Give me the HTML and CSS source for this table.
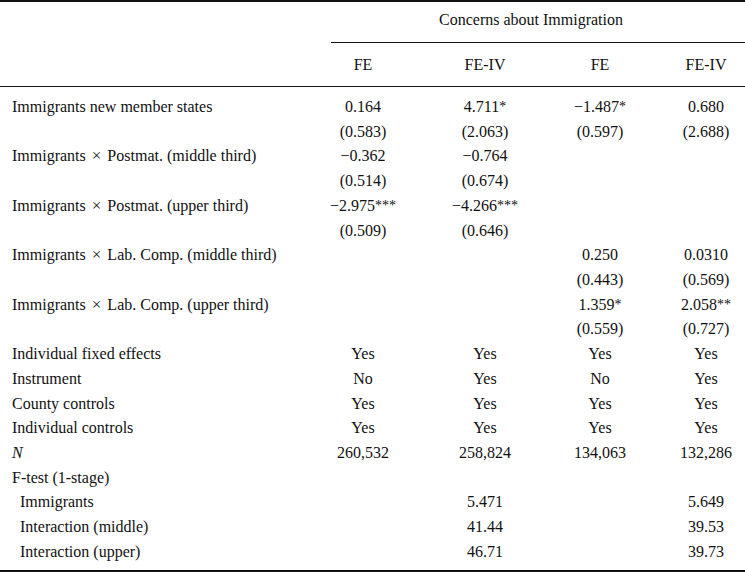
FILE: index.html
```html
<!DOCTYPE html>
<html lang="en">
<head>
<meta charset="utf-8">
<title>Concerns about Immigration</title>
<link rel="stylesheet" href="styles.css">
</head>
<body>
<div class="table">
  <div class="head head-group">
    <div class="group-title">Concerns about Immigration</div>
  </div>
  <div class="head head-cols">
    <div></div>
    <div class="c">FE</div>
    <div class="c">FE-IV</div>
    <div class="c">FE</div>
    <div class="c">FE-IV</div>
  </div>
  <div class="body">
    <div class="l">Immigrants new member states</div>
    <div class="c">0.164</div>
    <div class="c">4.711<sup>*</sup></div>
    <div class="c">−1.487<sup>*</sup></div>
    <div class="c">0.680</div>

    <div class="l"></div>
    <div class="c">(0.583)</div>
    <div class="c">(2.063)</div>
    <div class="c">(0.597)</div>
    <div class="c">(2.688)</div>

    <div class="l">Immigrants <span class="times">×</span> Postmat. (middle third)</div>
    <div class="c">−0.362</div>
    <div class="c">−0.764</div>
    <div class="c"></div>
    <div class="c"></div>

    <div class="l"></div>
    <div class="c">(0.514)</div>
    <div class="c">(0.674)</div>
    <div class="c"></div>
    <div class="c"></div>

    <div class="l">Immigrants <span class="times">×</span> Postmat. (upper third)</div>
    <div class="c">−2.975<sup>***</sup></div>
    <div class="c">−4.266<sup>***</sup></div>
    <div class="c"></div>
    <div class="c"></div>

    <div class="l"></div>
    <div class="c">(0.509)</div>
    <div class="c">(0.646)</div>
    <div class="c"></div>
    <div class="c"></div>

    <div class="l">Immigrants <span class="times">×</span> Lab. Comp. (middle third)</div>
    <div class="c"></div>
    <div class="c"></div>
    <div class="c">0.250</div>
    <div class="c">0.0310</div>

    <div class="l"></div>
    <div class="c"></div>
    <div class="c"></div>
    <div class="c">(0.443)</div>
    <div class="c">(0.569)</div>

    <div class="l">Immigrants <span class="times">×</span> Lab. Comp. (upper third)</div>
    <div class="c"></div>
    <div class="c"></div>
    <div class="c">1.359<sup>*</sup></div>
    <div class="c">2.058<sup>**</sup></div>

    <div class="l"></div>
    <div class="c"></div>
    <div class="c"></div>
    <div class="c">(0.559)</div>
    <div class="c">(0.727)</div>

    <div class="l">Individual fixed effects</div>
    <div class="c">Yes</div>
    <div class="c">Yes</div>
    <div class="c">Yes</div>
    <div class="c">Yes</div>

    <div class="l">Instrument</div>
    <div class="c">No</div>
    <div class="c">Yes</div>
    <div class="c">No</div>
    <div class="c">Yes</div>

    <div class="l">County controls</div>
    <div class="c">Yes</div>
    <div class="c">Yes</div>
    <div class="c">Yes</div>
    <div class="c">Yes</div>

    <div class="l">Individual controls</div>
    <div class="c">Yes</div>
    <div class="c">Yes</div>
    <div class="c">Yes</div>
    <div class="c">Yes</div>

    <div class="l"><i>N</i></div>
    <div class="c">260,532</div>
    <div class="c">258,824</div>
    <div class="c">134,063</div>
    <div class="c">132,286</div>

    <div class="l">F-test (1-stage)</div>
    <div class="c"></div>
    <div class="c"></div>
    <div class="c"></div>
    <div class="c"></div>

    <div class="l sub">Immigrants</div>
    <div class="c"></div>
    <div class="c">5.471</div>
    <div class="c"></div>
    <div class="c">5.649</div>

    <div class="l sub">Interaction (middle)</div>
    <div class="c"></div>
    <div class="c">41.44</div>
    <div class="c"></div>
    <div class="c">39.53</div>

    <div class="l sub">Interaction (upper)</div>
    <div class="c"></div>
    <div class="c">46.71</div>
    <div class="c"></div>
    <div class="c">39.73</div>
  </div>
</div>
</body>
</html>
```

FILE: styles.css
```css
html, body {
  margin: 0;
  padding: 0;
  background: #ffffff;
}

body {
  font-family: "Liberation Serif", "Times New Roman", serif;
  font-size: 16px;
  color: #111111;
  width: 745px;
  height: 572px;
  overflow: hidden;
}

.table {
  width: 745px;
  border-top: 2px solid #111111;
  border-bottom: 2px solid #111111;
  box-sizing: border-box;
}

.head-group {
  padding-top: 6px;
}

.group-title {
  margin-left: 331px;
  padding-right: 14px;
  text-align: center;
  line-height: 24px;
  padding-bottom: 10px;
  border-bottom: 1px solid #111111;
}

.head-cols,
.body {
  display: grid;
  grid-template-columns: 289px 148px 96px 134px 78px;
}

.head-cols {
  padding-top: 10px;
  padding-bottom: 9px;
  border-bottom: 1px solid #111111;
  line-height: 24px;
}

.body {
  grid-auto-rows: 24.72px;
  padding-top: 7.6px;
  padding-bottom: 5.7px;
  align-items: center;
}

.l {
  padding-left: 12px;
  white-space: nowrap;
}

.l.sub {
  padding-left: 20px;
}

.c {
  text-align: center;
  white-space: nowrap;
}

.times {
  font-size: 17px;
  margin: 0 2px 0 2px;
  color: #222222;
}

sup {
  font-size: 14px;
  line-height: 0;
  vertical-align: 1px;
}
```
